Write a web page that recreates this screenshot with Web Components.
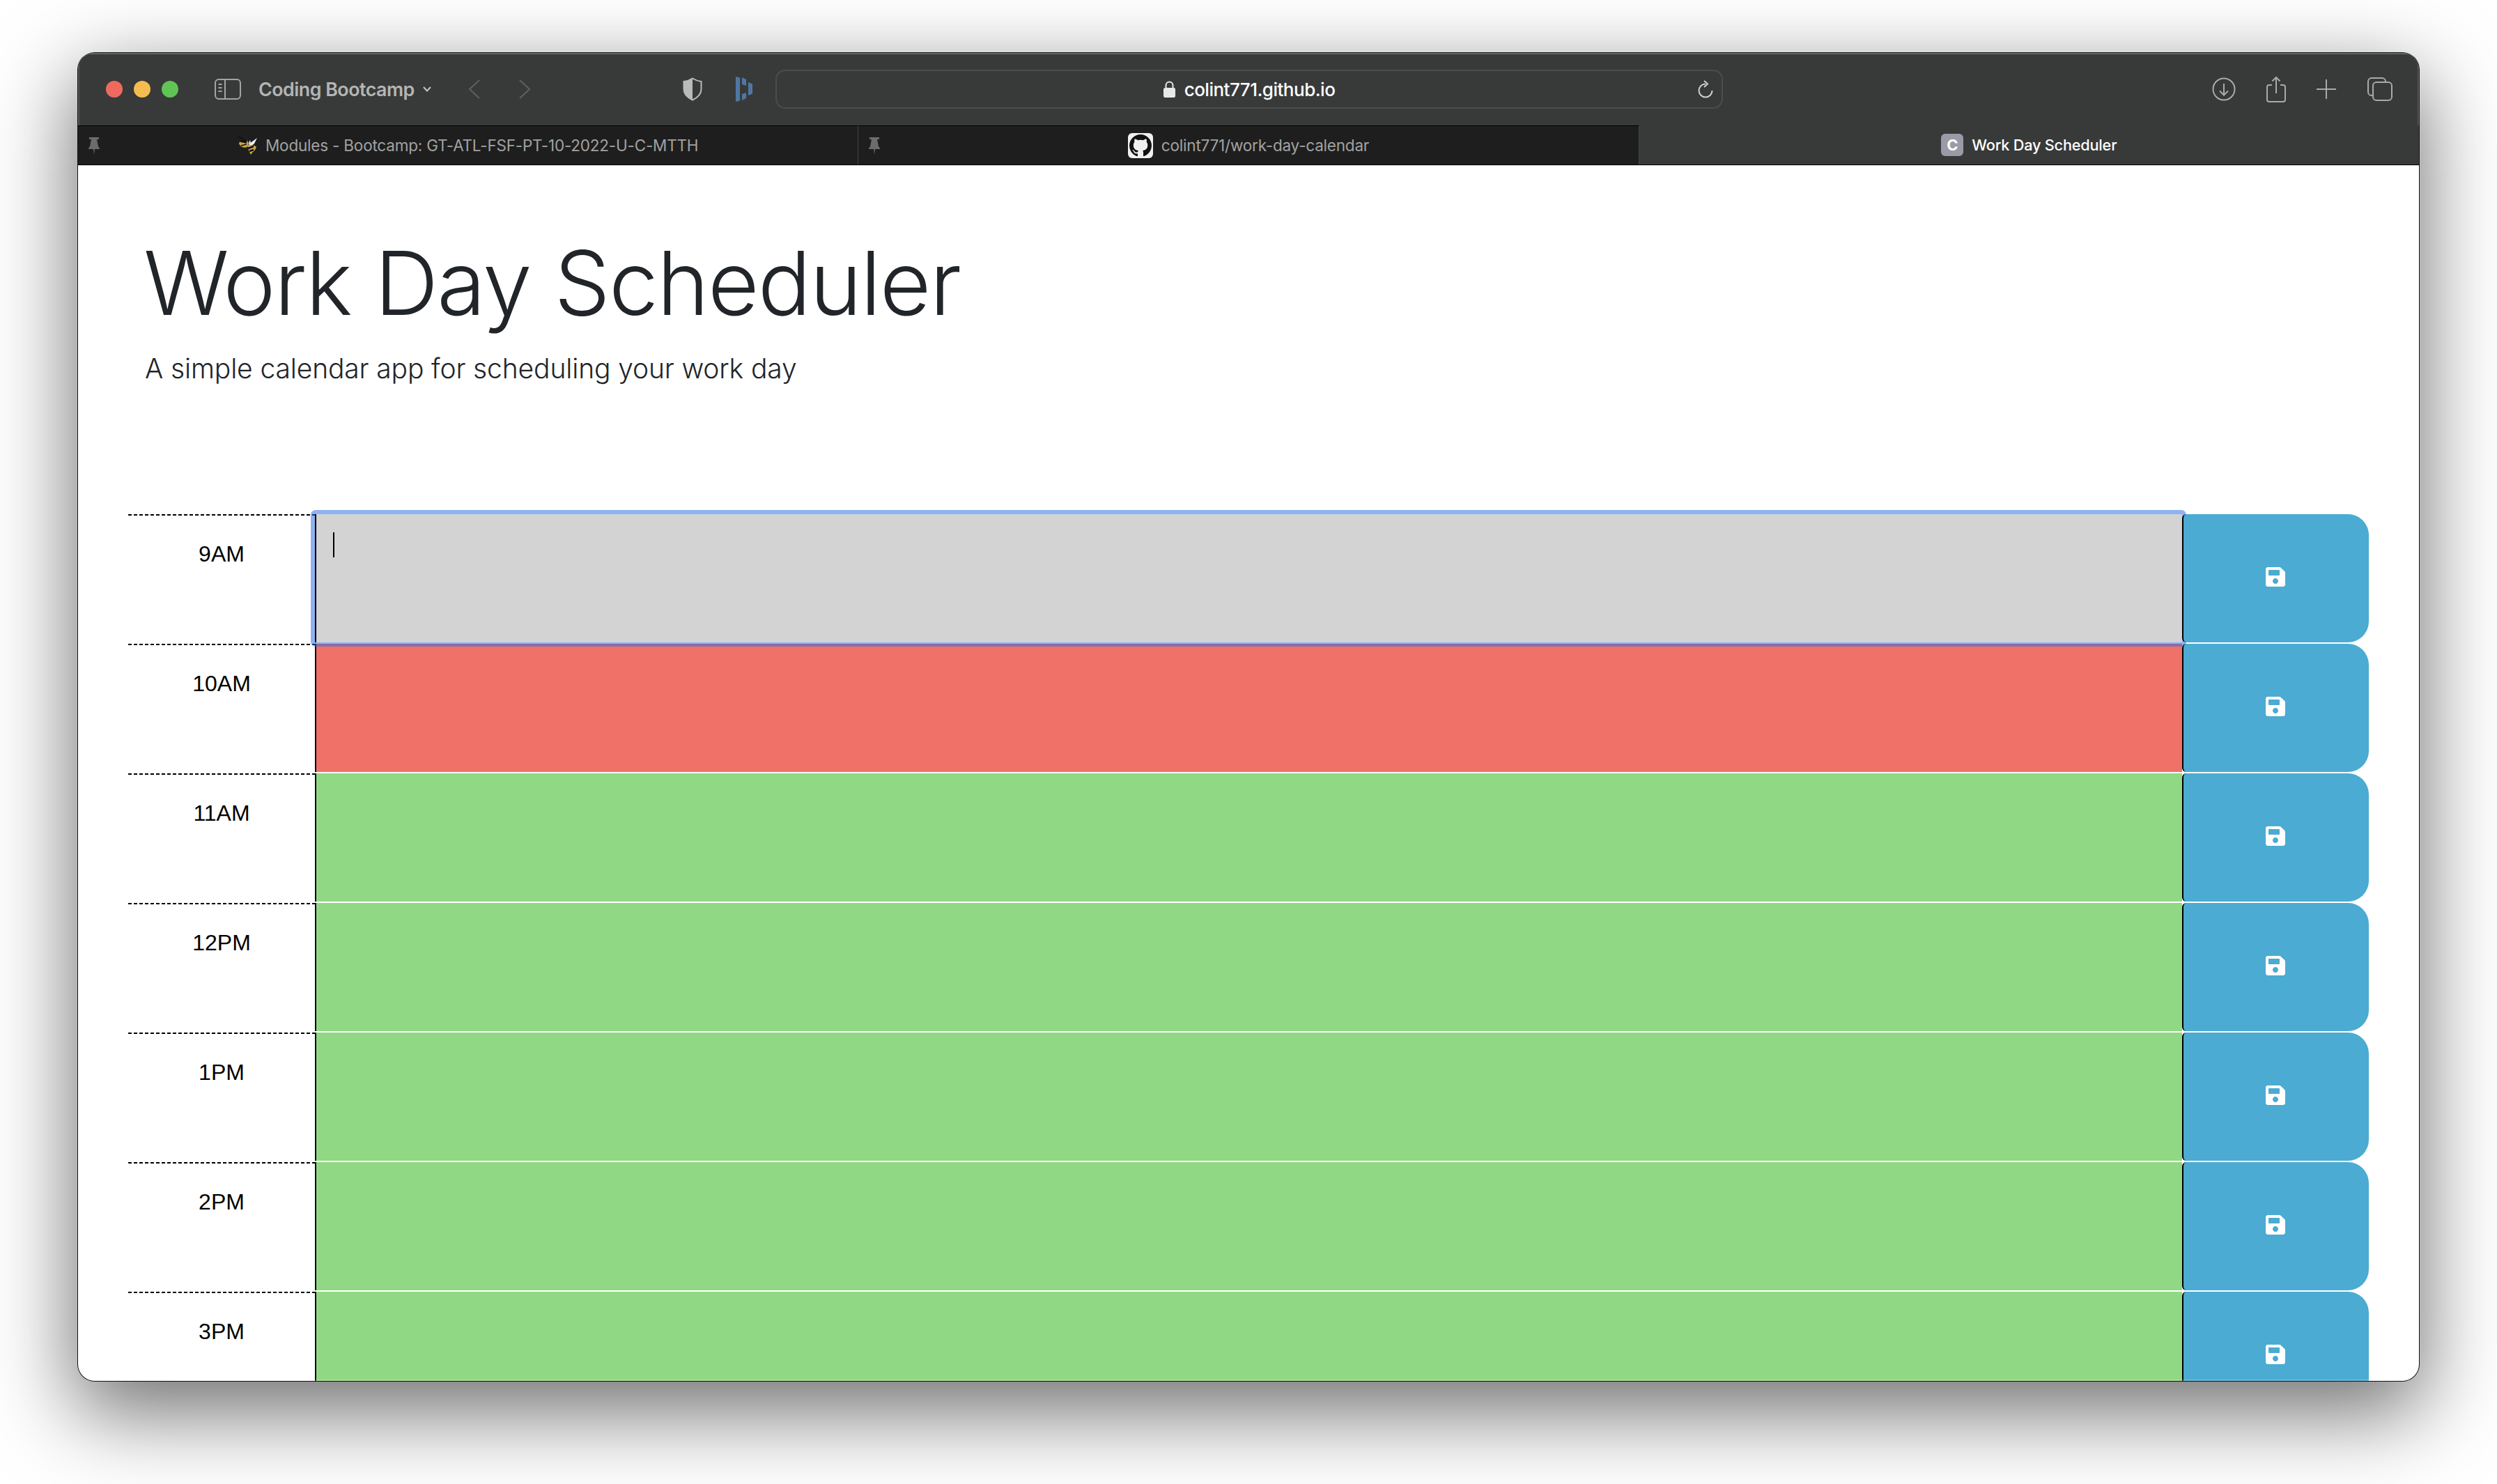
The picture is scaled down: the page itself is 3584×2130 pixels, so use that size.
<!DOCTYPE html>
<html lang="en">
<head>
<meta charset="utf-8">
<title>Work Day Scheduler</title>
<style>
  html, body { margin: 0; height: 100%; background: #fff; }
  body { padding: 76px 0 0 112px; box-sizing: border-box; overflow: hidden; font-family: "Liberation Sans", Arial, sans-serif; }
</style>
</head>
<body>
<browser-window>
  <browser-toolbar slot="chrome" url="colint771.github.io" group="Coding Bootcamp"></browser-toolbar>
  <tab-strip slot="chrome">
    <browser-tab pinned icon="bee">Modules - Bootcamp: GT-ATL-FSF-PT-10-2022-U-C-MTTH</browser-tab>
    <browser-tab pinned icon="github">colint771/work-day-calendar</browser-tab>
    <browser-tab active icon="letter">Work Day Scheduler</browser-tab>
  </tab-strip>
  <page-header heading="Work Day Scheduler">A simple calendar app for scheduling your work day</page-header>
  <time-block hour="9AM" state="past" focused></time-block>
  <time-block hour="10AM" state="present"></time-block>
  <time-block hour="11AM" state="future"></time-block>
  <time-block hour="12PM" state="future"></time-block>
  <time-block hour="1PM" state="future"></time-block>
  <time-block hour="2PM" state="future"></time-block>
  <time-block hour="3PM" state="future"></time-block>
</browser-window>

<script>
const SANS = '"Inter", "Liberation Sans", sans-serif';

class BrowserWindow extends HTMLElement {
  constructor() {
    super();
    this.attachShadow({mode: 'open'}).innerHTML = `
      <style>
        :host {
          display: flex;
          flex-direction: column;
          width: 3360px;
          height: 1906px;
          border-radius: 24px;
          overflow: hidden;
          background: #fff;
          box-shadow: 0 0 0 1px #111, 0 40px 120px 6px rgba(0,0,0,.56);
        }
        .page {
          flex: 1;
          min-height: 0;
          overflow: hidden;
          position: relative;
          border-top: 1px solid #d8d8d8;
        }
        .page::after {
          content: '';
          position: absolute;
          left: 0;
          right: 0;
          bottom: 0;
          height: 2px;
          z-index: 3;
          background: rgba(255,255,255,.2);
        }
      </style>
      <slot name="chrome"></slot>
      <div class="page"><slot></slot></div>
    `;
  }
}

class BrowserToolbar extends HTMLElement {
  constructor() {
    super();
    const group = this.getAttribute('group');
    const url = this.getAttribute('url');
    this.attachShadow({mode: 'open'}).innerHTML = `
      <style>
        :host {
          display: flex;
          align-items: center;
          height: 104px;
          padding-left: 40px;
          box-sizing: border-box;
          background: #383a39;
          box-shadow: inset 0 2px 0 #666, inset 2px 0 0 #555, inset -2px 0 0 #555;
          font-family: ${SANS};
          flex: none;
        }
        svg { display: block; flex: none; fill: none; }
        .dot { width: 24px; height: 24px; border-radius: 50%; margin-right: 16px; flex: none; }
        .group {
          margin-left: 26px;
          width: 226px;
          color: #b4b5b4;
          font-size: 26.800px;
          font-weight: 600;
          white-space: nowrap;
          letter-spacing: -.5px;
          position: relative;
          left: -1px;
        }
        .url {
          margin-left: 33px;
          width: 1360px;
          height: 56px;
          box-sizing: border-box;
          border: 2px solid #4b4d4c;
          border-radius: 14px;
          display: flex;
          align-items: center;
          justify-content: center;
          position: relative;
          color: #fff;
          font-size: 26px;
          font-weight: 500;
          letter-spacing: -.5px;
        }
        .url span { margin-left: 13px; }
        .url .reload { position: absolute; right: 11px; top: 13px; }
      </style>
      <i class="dot" style="background:#ee6a5f"></i>
      <i class="dot" style="background:#f5bd4f"></i>
      <i class="dot" style="background:#5fc454;margin-right:0"></i>
      <svg style="margin-left:52px" width="38" height="30" viewBox="0 0 38 30" stroke="#a3a4a3" stroke-width="2">
        <rect x="1" y="1" width="36" height="28" rx="5"/>
        <path d="M15 1v28M5.500 8h5M5.500 13h5M5.500 18h5"/>
      </svg>
      <div class="group">${group}</div>
      <svg style="margin-left:9px" width="12" height="8" viewBox="0 0 12 8" stroke="#c4c5c4" stroke-width="2"><path d="M1 1l5 5.500L11 1"/></svg>
      <svg style="margin-left:53px" width="18" height="28" viewBox="0 0 18 28" stroke="#5e605f" stroke-width="2"><path d="M16 1L2 14l14 13"/></svg>
      <svg style="margin-left:54px" width="18" height="28" viewBox="0 0 18 28" stroke="#5e605f" stroke-width="2"><path d="M2 1l14 13L2 27"/></svg>
      <svg style="margin-left:218px" width="28" height="34" viewBox="0 0 28 34">
        <path d="M14 1.500C10 4 6 5.500 1.500 6v11c0 7 5 12 12.500 15.500 7.500-3.500 12.500-8.500 12.500-15.500V6C22 5.500 18 4 14 1.500z" stroke="#b9bab9" stroke-width="2"/>
        <path d="M14 1.500C10 4 6 5.500 1.500 6v11c0 7 5 12 12.500 15.500z" fill="#b9bab9"/>
      </svg>
      <svg style="margin-left:48px" width="24" height="36" viewBox="0 0 24 36">
        <path fill="#4f77a3" d="M0 0l6 1.500v33L0 36zM9 1l6 3v9l-6-2zM9 25l6-2v8l-6 3zM18 8l6 2.500v14L18 27z"/>
      </svg>
      <div class="url">
        <svg width="17" height="24" viewBox="0 0 17 24"><path d="M3.500 11V6.500a5 5 0 0 1 10 0V11" stroke="#e8e8e8" stroke-width="2"/><rect x="0" y="10" width="17" height="14" rx="2.500" fill="#e8e8e8"/></svg>
        <span>${url}</span>
        <svg class="reload" width="24" height="26" viewBox="0 0 24 26" stroke="#d0d0d0" stroke-width="2"><path d="M12 5.500a9.500 9.500 0 1 0 9.500 9.500"/><path d="M10 1l5 4.500-5 4.500"/></svg>
      </div>
      <svg style="margin-left:702px" width="34" height="34" viewBox="0 0 34 34" stroke="#a9aaa9" stroke-width="2"><circle cx="17" cy="17" r="15.500"/><path d="M17 9v16M11 19.500l6 6 6-6"/></svg>
      <svg style="margin-left:44px" width="28" height="38" viewBox="0 0 28 38" stroke="#a9aaa9" stroke-width="2"><path d="M8 13H4a3 3 0 0 0-3 3v18a3 3 0 0 0 3 3h20a3 3 0 0 0 3-3V16a3 3 0 0 0-3-3h-4"/><path d="M14 25V2M8.500 7.500L14 2l5.500 5.500"/></svg>
      <svg style="margin-left:44px" width="28" height="28" viewBox="0 0 28 28" stroke="#a9aaa9" stroke-width="2"><path d="M14 0v28M0 14h28"/></svg>
      <svg style="margin-left:45px" width="36" height="34" viewBox="0 0 36 34" stroke="#a9aaa9" stroke-width="2"><rect x="8" y="7" width="27" height="26" rx="5"/><path d="M8 26H6a5 5 0 0 1-5-5V6a5 5 0 0 1 5-5h15a5 5 0 0 1 5 5v1"/></svg>
    `;
  }
}

class TabStrip extends HTMLElement {
  constructor() {
    super();
    this.attachShadow({mode: 'open'}).innerHTML = `
      <style>
        :host {
          display: flex;
          flex: none;
          height: 56px;
          background: #383a39;
          border-bottom: 1px solid #000;
        }
      </style>
      <slot></slot>
    `;
  }
}

const TAB_ICONS = {
  bee: `<svg width="28" height="28" viewBox="0 0 28 28">
      <path d="M1 1l9 5" stroke="#111" stroke-width="1.500" fill="none"/>
      <path d="M16 12L28 3l-4 8-5 4z" fill="#f2f2f2"/>
      <path d="M18 6l-3 6 4-2z" fill="#e8e8e8"/>
      <path d="M2 11c1-5 7-7 11-5 3 2 3 7 1 10-4 2-10 0-12-5z" fill="#c9a64b"/>
      <path d="M4 8c3-3 7-3 9-1l-1 3c-3-1-6-1-8-2zM5 14l8-2" stroke="#111" stroke-width="1.500" fill="#111"/>
      <path d="M15 13c4 0 9 0 12 3-1 3-3 6-6 8l-2 3c-2-4-5-9-4-14z" fill="#c9a64b"/>
      <path d="M15 18l8-3M17 22l6-2" stroke="#111" stroke-width="2.500"/>
    </svg>`,
  github: `<svg width="36" height="36" viewBox="0 0 36 36">
      <rect width="36" height="36" rx="6" fill="#f0f0f0"/>
      <g transform="translate(2 2)"><path fill="#111" d="M8 0C3.580 0 0 3.580 0 8c0 3.540 2.290 6.530 5.470 7.590.4.070.55-.17.55-.38 0-.19-.01-.82-.01-1.490-2.010.37-2.530-.49-2.690-.94-.09-.23-.48-.94-.82-1.130-.28-.15-.68-.52-.01-.53.63-.01 1.080.58 1.230.82.72 1.210 1.870.87 2.330.66.070-.52.28-.87.51-1.070-1.780-.2-3.640-.89-3.640-3.950 0-.87.31-1.590.82-2.150-.08-.2-.36-1.020.08-2.120 0 0 .67-.21 2.200.82.64-.18 1.320-.27 2-.27.68 0 1.360.09 2 .27 1.530-1.040 2.200-.82 2.200-.82.44 1.100.16 1.920.08 2.120.51.56.82 1.270.82 2.150 0 3.070-1.870 3.750-3.650 3.950.29.25.54.73.54 1.480 0 1.070-.01 1.930-.01 2.200 0 .21.15.46.55.38A8.013 8.013 0 0016 8c0-4.420-3.580-8-8-8z" transform="scale(2)"/></g>
    </svg>`,
  letter: `<span class="letter">C</span>`,
};

class BrowserTab extends HTMLElement {
  constructor() {
    super();
    const icon = TAB_ICONS[this.getAttribute('icon')] || '';
    const pin = this.hasAttribute('pinned') ? `
      <svg class="pin" width="16" height="25" viewBox="0 0 16 25" fill="#6c6c6c">
        <path d="M1 0h14v3h-3l2 10 2 3v1H0v-1l2-3L4 3H1z"/><path d="M7 17h2l-1 8z"/>
      </svg>` : '';
    this.attachShadow({mode: 'open'}).innerHTML = `
      <style>
        :host {
          flex: 1 1 0;
          min-width: 0;
          display: flex;
          align-items: center;
          justify-content: center;
          gap: 12px;
          position: relative;
          box-sizing: border-box;
          background: #1e1e1e;
          border-top: 1px solid #000;
          border-right: 1px solid #444;
          color: #a2a2a2;
          font-family: ${SANS};
          font-size: 22.500px;
          letter-spacing: -.2px;
          white-space: nowrap;
        }
        :host([active]) {
          background: #383a39;
          border: 0;
          color: #fff;
          font-weight: 500;
          font-size: 21.700px;
        }
        svg { display: block; flex: none; }
        .pin { position: absolute; left: 15px; top: 16px; }
        .letter {
          width: 32px;
          height: 32px;
          border-radius: 6px;
          background: #9a9ba7;
          color: #fff;
          font-size: 22px;
          font-weight: 700;
          display: flex;
          align-items: center;
          justify-content: center;
        }
      </style>
      ${pin}${icon}<slot></slot>
    `;
  }
}

class PageHeader extends HTMLElement {
  constructor() {
    super();
    this.attachShadow({mode: 'open'}).innerHTML = `
      <style>
        :host {
          display: block;
          height: 500px;
          padding: 92px 0 0 96px;
          box-sizing: border-box;
          color: #212529;
          font-family: "Inter", "Liberation Sans", sans-serif;
          font-weight: 300;
        }
        h1 {
          margin: 0 0 17px -2px;
          font-size: 127px;
          font-weight: 300;
          line-height: 152px;
          letter-spacing: -1.900px;
        }
        p {
          margin: 0;
          font-size: 39px;
          line-height: 60px;
          letter-spacing: -.14px;
        }
      </style>
      <h1>${this.getAttribute('heading')}</h1>
      <p><slot></slot></p>
    `;
  }
}

class SaveButton extends HTMLElement {
  constructor() {
    super();
    this.attachShadow({mode: 'open'}).innerHTML = `
      <style>
        :host {
          display: flex;
          align-items: center;
          justify-content: center;
          position: relative;
          z-index: 2;
          height: 184px;
          padding: 0 3px 4px 0;
          box-sizing: border-box;
          background: #4babd2;
          border-left: 2px solid #000;
          border-radius: 6px 30px 30px 6px;
          color: #fff;
        }
        svg { display: block; }
      </style>
      <svg width="28" height="32" viewBox="0 0 448 512" fill="currentColor"><path d="M433.941 129.941l-83.882-83.882A48 48 0 0 0 316.118 32H48C21.490 32 0 53.490 0 80v352c0 26.510 21.490 48 48 48h352c26.510 0 48-21.490 48-48V163.882a48 48 0 0 0-14.059-33.941zM224 416c-35.346 0-64-28.654-64-64 0-35.346 28.654-64 64-64s64 28.654 64 64c0 35.346-28.654 64-64 64zm96-304.520V212c0 6.627-5.373 12-12 12H76c-6.627 0-12-5.373-12-12V108c0-6.627 5.373-12 12-12h228.520c3.183 0 6.235 1.264 8.485 3.515l3.480 3.480A11.996 11.996 0 0 1 320 111.480z"/></svg>
    `;
  }
}

const STATE_COLORS = {past: '#d3d3d3', present: '#ef7168', future: '#90d883'};

class TimeBlock extends HTMLElement {
  constructor() {
    super();
    const bg = STATE_COLORS[this.getAttribute('state')];
    const focused = this.hasAttribute('focused');
    this.attachShadow({mode: 'open'}).innerHTML = `
      <style>
        :host {
          display: grid;
          grid-template-columns: 268px 2680px 268px;
          height: 186px;
          margin-left: 72px;
          font-family: "Liberation Sans", Arial, sans-serif;
          color: #000;
        }
        .hour {
          background: repeating-linear-gradient(90deg, #000 0 5.330px, transparent 5.330px 8px) 0 0 / 100% 2px no-repeat;
          box-sizing: border-box;
          height: 186px;
          padding-top: 39px;
          text-align: center;
          font-size: 32px;
          line-height: 37px;
        }
        .cell { position: relative; height: 184px; }
        textarea {
          display: block;
          width: 100%;
          height: 100%;
          margin: 0;
          padding: 0;
          box-sizing: border-box;
          border: 0;
          border-left: 2px solid #000;
          border-radius: 0;
          outline: 0;
          resize: none;
          background: ${bg};
        }
        .ring {
          position: absolute;
          inset: -6px;
          border: 6px solid rgba(40,107,232,.52);
          border-radius: 7px;
          z-index: 1;
          pointer-events: none;
        }
        .caret {
          position: absolute;
          left: 26px;
          top: 26px;
          width: 2px;
          height: 36px;
          background: #000;
        }
      </style>
      <div class="hour">${this.getAttribute('hour')}</div>
      <div class="cell">
        <textarea aria-label="${this.getAttribute('hour')}"></textarea>
        ${focused ? '<div class="ring"></div><div class="caret"></div>' : ''}
      </div>
      <save-button></save-button>
    `;
  }
}

customElements.define('browser-window', BrowserWindow);
customElements.define('browser-toolbar', BrowserToolbar);
customElements.define('tab-strip', TabStrip);
customElements.define('browser-tab', BrowserTab);
customElements.define('page-header', PageHeader);
customElements.define('save-button', SaveButton);
customElements.define('time-block', TimeBlock);
</script>
</body>
</html>
